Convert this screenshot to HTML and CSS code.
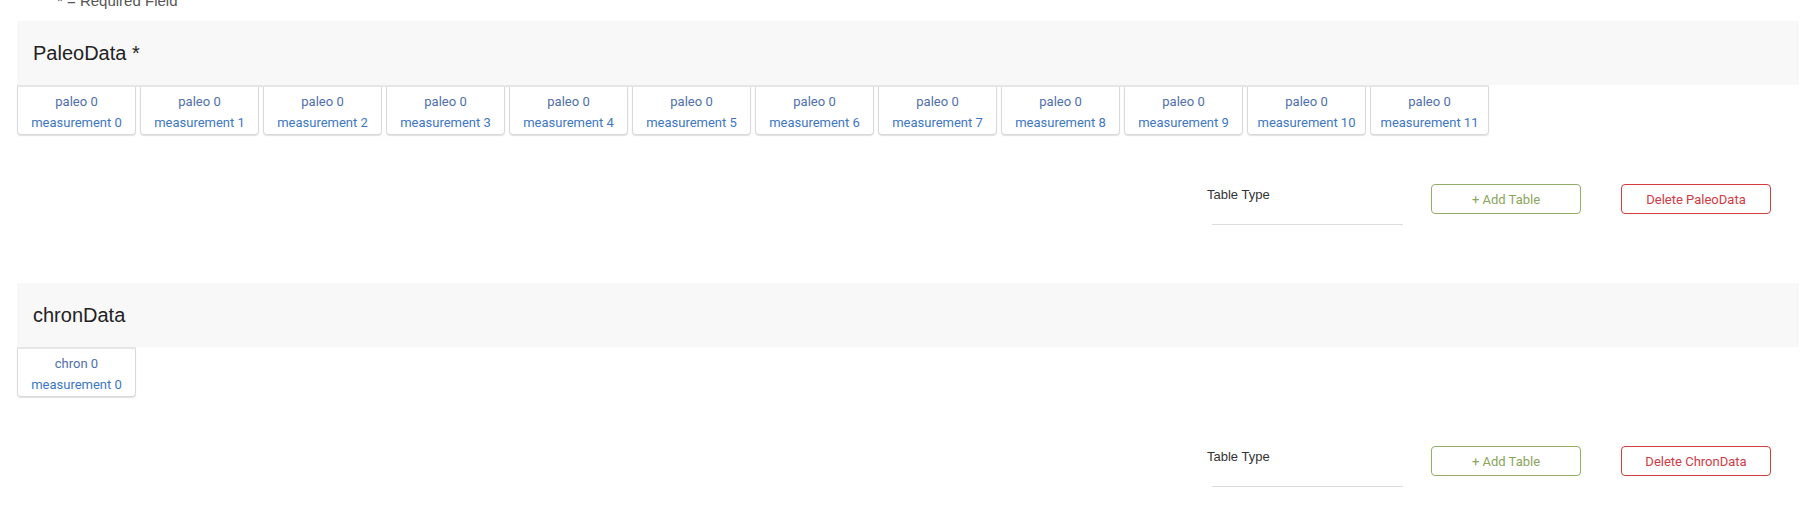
FILE: index.html
```html
<!DOCTYPE html>
<html>
<head>
<meta charset="utf-8">
<link rel="stylesheet" href="styles.css">
</head>
<body>
<div class="page">
  <div class="required">* = Required Field</div>

  <section class="block">
    <div class="block-head">PaleoData *</div>
    <div class="tabbar">
      <div class="tab"><span class="t1">paleo 0</span><span class="t2">measurement 0</span></div>
      <div class="tab"><span class="t1">paleo 0</span><span class="t2">measurement 1</span></div>
      <div class="tab"><span class="t1">paleo 0</span><span class="t2">measurement 2</span></div>
      <div class="tab"><span class="t1">paleo 0</span><span class="t2">measurement 3</span></div>
      <div class="tab"><span class="t1">paleo 0</span><span class="t2">measurement 4</span></div>
      <div class="tab"><span class="t1">paleo 0</span><span class="t2">measurement 5</span></div>
      <div class="tab"><span class="t1">paleo 0</span><span class="t2">measurement 6</span></div>
      <div class="tab"><span class="t1">paleo 0</span><span class="t2">measurement 7</span></div>
      <div class="tab"><span class="t1">paleo 0</span><span class="t2">measurement 8</span></div>
      <div class="tab"><span class="t1">paleo 0</span><span class="t2">measurement 9</span></div>
      <div class="tab"><span class="t1">paleo 0</span><span class="t2">measurement 10</span></div>
      <div class="tab"><span class="t1">paleo 0</span><span class="t2">measurement 11</span></div>
    </div>
    <div class="controls">
      <div class="field"><span class="field-label">Table Type</span></div>
      <button class="btn btn-add">+ Add Table</button>
      <button class="btn btn-del">Delete PaleoData</button>
    </div>
  </section>

  <section class="block">
    <div class="block-head">chronData</div>
    <div class="tabbar">
      <div class="tab"><span class="t1">chron 0</span><span class="t2">measurement 0</span></div>
    </div>
    <div class="controls">
      <div class="field"><span class="field-label">Table Type</span></div>
      <button class="btn btn-add">+ Add Table</button>
      <button class="btn btn-del">Delete ChronData</button>
    </div>
  </section>
</div>
</body>
</html>
```

FILE: styles.css
```css
html, body {
  margin: 0;
  padding: 0;
  background: #ffffff;
  overflow: hidden;
}

.page {
  width: 1805px;
  height: 507px;
  overflow: hidden;
  font-family: "Liberation Sans", Arial, sans-serif;
}

.required {
  margin-top: -8px;
  height: 18px;
  line-height: 18px;
  font-size: 15px;
  color: #555;
  padding-left: 57px;
}

.block {
  display: flex;
  flex-direction: column;
  margin: 11px 6px 0 17px;
  height: 248px;
}

.block + .block {
  margin-top: 14px;
}

.block-head {
  height: 64px;
  display: flex;
  align-items: center;
  padding-left: 16px;
  background: #f8f8f8;
  font-size: 20px;
  color: #222;
}

.tabbar {
  display: flex;
  gap: 4px;
  align-self: flex-start;
  border-top: 2px solid #e6e6e6;
}

.tab {
  width: 119px;
  height: 48px;
  box-sizing: border-box;
  display: flex;
  flex-direction: column;
  align-items: center;
  padding-top: 4px;
  border: 1px solid #d9d9d9;
  border-top: none;
  border-radius: 0 0 4px 4px;
  box-shadow: 0 1px 1px rgba(0, 0, 0, 0.12);
  font-family: Roboto, "Liberation Sans", sans-serif;
  font-size: 13px;
  line-height: 21px;
}

.t1 { color: #4f6fab; }
.t2 { color: #3d77c2; }

.controls {
  display: flex;
  align-items: flex-start;
  justify-content: flex-end;
  margin-top: 49px;
  padding-right: 28px;
}

.field {
  width: 196px;
  height: 41px;
  box-sizing: border-box;
  margin-right: 28px;
  position: relative;
}

.field::after {
  content: "";
  position: absolute;
  left: 5px;
  right: 0;
  top: 40px;
  height: 1px;
  background: #dcdcdc;
}

.field-label {
  display: block;
  padding-top: 3px;
  font-size: 13px;
  line-height: 15px;
  color: #333;
}

.btn {
  width: 150px;
  height: 30px;
  box-sizing: border-box;
  background: #fff;
  border-radius: 4px;
  font-family: Roboto, "Liberation Sans", sans-serif;
  font-size: 13px;
  padding: 0;
  cursor: pointer;
}

.btn-add {
  border: 1px solid #94ad66;
  color: #8aa45c;
}

.btn-del {
  margin-left: 40px;
  border: 1px solid #d43c3f;
  color: #cf3a44;
}
```
